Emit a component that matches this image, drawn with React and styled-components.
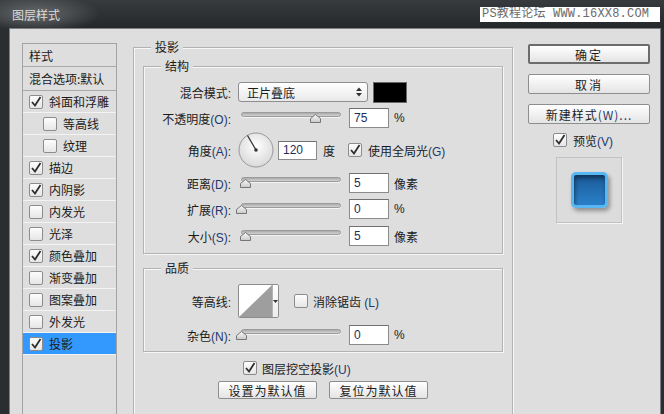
import React from "react";
import styled, { createGlobalStyle } from "styled-components";

const GlobalStyle = createGlobalStyle`
  html, body {
    margin: 0;
    padding: 0;
    background: #2b2e31;
  }
  body {
    font-family: "Liberation Sans", "Noto Sans CJK SC", sans-serif;
    font-size: 12px;
    color: #1b1b1b;
  }
  * {
    box-sizing: border-box;
  }
`;

const Window = styled.div`
  width: 664px;
  height: 414px;
  overflow: hidden;
  display: flex;
  flex-direction: column;
  background: #2b2e31;
`;

const TitleBar = styled.div`
  height: 28px;
  flex-shrink: 0;
  display: flex;
  align-items: center;
  justify-content: space-between;
  padding: 0 4px 0 12px;
  background: radial-gradient(ellipse 80px 24px at 36px 14px, rgba(125, 128, 131, 0.75), rgba(125, 128, 131, 0) 80%),
    linear-gradient(#383b3e, #25282b);
`;

const Title = styled.span`
  color: #dcdcdc;
  font-family: "Noto Sans CJK SC", sans-serif;
  font-size: 12px;
`;

const Watermark = styled.span`
  height: 15px;
  line-height: 15px;
  padding: 0 4px 0 2px;
  width: 180px;
  background: #fff;
  color: #6b6b6b;
  font-family: "Liberation Mono", "Noto Sans CJK SC", monospace;
  font-size: 12px;
  letter-spacing: 0.2px;
  white-space: nowrap;
  overflow: hidden;
`;

const Body = styled.div`
  flex: 1;
  margin: 0 3px 0 9px;
  background: #dedede;
  border: 1px solid #7d8083;
  border-bottom: none;
  display: flex;
  align-items: flex-start;
  padding: 14px 0 0 12px;
`;

/* ---------- left style list ---------- */

const LayerList = styled.div`
  width: 95px;
  height: 400px;
  flex-shrink: 0;
  border: 1px solid #a3a3a3;
  background: #dedede;
`;

const ListHead = styled.div`
  height: ${(p) => p.$h}px;
  display: flex;
  align-items: center;
  padding-left: 6px;
  border-bottom: 1px solid #a9a9a9;
  white-space: nowrap;
  font-family: "Noto Sans CJK SC", sans-serif;
`;

const ListItem = styled.div`
  height: 22px;
  display: flex;
  align-items: center;
  gap: 6px;
  padding-left: ${(p) => (p.$indent ? 20 : 6)}px;
  border-bottom: 1px solid #f3f3f3;
  background: ${(p) => (p.$active ? "#3399ff" : "transparent")};
  white-space: nowrap;
  font-family: "Noto Sans CJK SC", sans-serif;
`;

/* ---------- check box ---------- */

const Box = styled.span`
  width: 14px;
  height: 14px;
  flex-shrink: 0;
  display: inline-flex;
  border: 1px solid #8c8c8c;
  border-radius: 2px;
  background: linear-gradient(#fdfdfd, #e6e6e6);
  margin-left: ${(p) => p.$ml || 0}px;
`;

const CheckBox = ({ checked, ml }) => (
  <Box $ml={ml}>
    {checked && (
      <svg width="12" height="12" viewBox="0 0 12 12">
        <polyline points="2,6 5,9.5 10.5,1" fill="none" stroke="#2e2e2e" strokeWidth="1.8" />
      </svg>
    )}
  </Box>
);

/* ---------- middle panel ---------- */

const Group = styled.div`
  position: relative;
  border: 1px solid #b2b2b2;
  box-shadow: inset 1px 1px 0 #f7f7f7, 1px 1px 0 #f7f7f7;
  padding: ${(p) => p.$pad};
  margin-top: ${(p) => p.$mt || 0}px;
  width: ${(p) => (p.$w ? `${p.$w}px` : "auto")};
  flex-shrink: 0;
`;

const Caption = styled.span`
  position: absolute;
  top: -9px;
  left: 17px;
  padding: 0 4px;
  line-height: 16px;
  background: #dedede;
  font-family: "Noto Sans CJK SC", sans-serif;
`;

const FormRow = styled.div`
  display: flex;
  align-items: center;
  height: ${(p) => p.$h || 20}px;
  margin-top: ${(p) => p.$mt || 0}px;
  margin-left: ${(p) => p.$ml || 0}px;
  white-space: nowrap;
`;

const Label = styled.span`
  width: 87px;
  flex-shrink: 0;
  text-align: right;
  white-space: nowrap;
`;

const Key = styled.span`
  color: #24386b;
`;

const Text = styled.span`
  margin-left: ${(p) => p.$ml || 0}px;
`;

const Select = styled.div`
  margin-left: 7px;
  width: 130px;
  height: 20px;
  border: 1px solid #8e8e8e;
  border-radius: 3px;
  background: linear-gradient(#ffffff, #e9e9e9);
  display: flex;
  align-items: center;
  justify-content: space-between;
  padding: 0 5px 0 8px;
`;

const Swatch = styled.div`
  margin-left: 5px;
  width: 34px;
  height: 21px;
  background: #000;
  border: 1px solid #6a6a6a;
`;

const SliderWrap = styled.div`
  position: relative;
  width: 113px;
  height: 20px;
  margin-left: 5px;
  flex-shrink: 0;
`;

const Track = styled.div`
  position: absolute;
  left: 5px;
  top: 4px;
  width: 100px;
  height: 5px;
  border: 1px solid #9b9b9b;
  border-radius: 3px;
  background: linear-gradient(#a9a9a9, #d3d3d3);
  box-shadow: 0 1px 0 #f4f4f4;
`;

const Thumb = styled.svg`
  position: absolute;
  top: 6px;
`;

const Slider = ({ value }) => (
  <SliderWrap>
    <Track />
    <Thumb width="11" height="9" viewBox="0 0 11 9" style={{ left: 5 + value * 99 - 5.5 }}>
      <defs>
        <linearGradient id="tg" x1="0" y1="0" x2="0" y2="1">
          <stop offset="0" stopColor="#fafafa" />
          <stop offset="1" stopColor="#c9c9c9" />
        </linearGradient>
      </defs>
      <polygon points="0.5,8.5 0.5,4.5 5.5,0.5 10.5,4.5 10.5,8.5" fill="url(#tg)" stroke="#767676" />
    </Thumb>
  </SliderWrap>
);

const Field = styled.input`
  width: ${(p) => p.$w || 40}px;
  height: ${(p) => p.$h || 20}px;
  margin: 0 0 0 ${(p) => p.$ml || 0}px;
  padding: 0 0 0 4px;
  border: 1px solid #8b8b8b;
  border-top-color: #707070;
  background: #fff;
  font-family: "Liberation Sans", sans-serif;
  font-size: 12px;
  color: #1d2f5c;
  outline: none;
  flex-shrink: 0;
`;

const Dial = styled.svg`
  margin-left: 7px;
  flex-shrink: 0;
`;

const Contour = styled.div`
  margin-left: 7px;
  width: 41px;
  height: 34px;
  display: flex;
  border: 1px solid #8c8c8c;
  border-radius: 2px;
  background: #fff;
  overflow: hidden;
  flex-shrink: 0;
`;

const DropStrip = styled.div`
  flex: 1;
  border-left: 1px solid #b4b4b4;
  display: flex;
  align-items: center;
  justify-content: center;
  background: linear-gradient(#fff, #ececec);
`;

const ButtonRow = styled.div`
  display: flex;
  justify-content: center;
  gap: 12px;
  margin-top: 3px;
`;

const Button = styled.div`
  width: ${(p) => p.$w || 99}px;
  height: ${(p) => p.$h || 18}px;
  display: flex;
  align-items: center;
  justify-content: center;
  border: ${(p) => (p.$primary ? "2px solid #6c6c6c" : "1px solid #8e8e8e")};
  border-radius: 2px;
  background: linear-gradient(#ffffff, #e4e4e4);
  font-family: "Noto Sans CJK SC", sans-serif;
  letter-spacing: ${(p) => p.$ls || 0}px;
  white-space: nowrap;
`;

/* ---------- right column ---------- */

const Side = styled.div`
  width: 122px;
  margin: 1px 0 0 15px;
  display: flex;
  flex-direction: column;
  gap: 10px;
  flex-shrink: 0;
`;

const PreviewToggle = styled.div`
  display: flex;
  align-items: center;
  gap: 6px;
  height: 16px;
  margin-top: -2px;
  padding-left: 25px;
`;

const PreviewBox = styled.div`
  width: 66px;
  height: 66px;
  margin: -1px auto 0;
  border: 1px solid #c2c2c2;
  box-shadow: 1px 1px 0 #f6f6f6;
  background: #dcdcdc;
  display: flex;
  align-items: center;
  justify-content: center;
`;

const BlueSquare = styled.div`
  width: 37px;
  height: 36px;
  border-radius: 5px;
  border: 3px solid #58b6f2;
  background: linear-gradient(#1b5a98, #2a80c9);
  box-shadow: inset 1px 3px 4px rgba(0, 0, 0, 0.45), 2px 3px 4px rgba(0, 0, 0, 0.35);
`;

const effects = [
  { name: "斜面和浮雕", checked: true },
  { name: "等高线", indent: true },
  { name: "纹理", indent: true },
  { name: "描边", checked: true },
  { name: "内阴影", checked: true },
  { name: "内发光" },
  { name: "光泽" },
  { name: "颜色叠加", checked: true },
  { name: "渐变叠加" },
  { name: "图案叠加" },
  { name: "外发光" },
  { name: "投影", checked: true, active: true },
];

export default function App() {
  return (
    <Window>
      <GlobalStyle />
      <TitleBar>
        <Title>图层样式</Title>
        <Watermark>PS教程论坛 WWW.16XX8.COM</Watermark>
      </TitleBar>
      <Body>
        <LayerList>
          <ListHead $h={23}>样式</ListHead>
          <ListHead $h={24}>混合选项:默认</ListHead>
          {effects.map((e) => (
            <ListItem key={e.name} $indent={e.indent} $active={e.active}>
              <CheckBox checked={e.checked} />
              {e.name}
            </ListItem>
          ))}
        </LayerList>

        <div style={{ marginLeft: 16, marginTop: 4 }}>
          <Group $w={380} $pad="18px 9px 40px 9px">
            <Caption>投影</Caption>
            <Group $pad="15px 0 7px 0">
              <Caption>结构</Caption>
              <FormRow>
                <Label>混合模式:</Label>
                <Select>
                  <span style={{ fontFamily: "Noto Sans CJK SC" }}>正片叠底</span>
                  <svg width="6" height="10" viewBox="0 0 6 10">
                    <polygon points="0,4 3,0.5 6,4" fill="#333" />
                    <polygon points="0,6 3,9.5 6,6" fill="#333" />
                  </svg>
                </Select>
                <Swatch />
              </FormRow>
              <FormRow $mt={6}>
                <Label>
                  不透明度<Key>(O)</Key>:
                </Label>
                <Slider value={0.75} />
                <Field readOnly value="75" />
                <Text $ml={5}>%</Text>
              </FormRow>
              <FormRow $mt={4} $h={36}>
                <Label>
                  角度<Key>(A)</Key>:
                </Label>
                <Dial width="36" height="36" viewBox="0 0 36 36">
                  <defs>
                    <radialGradient id="dg" cx="0.5" cy="0.4" r="0.6">
                      <stop offset="0" stopColor="#ffffff" />
                      <stop offset="1" stopColor="#d9d9d9" />
                    </radialGradient>
                  </defs>
                  <circle cx="18" cy="18" r="17" fill="url(#dg)" stroke="#989898" />
                  <line x1="18" y1="18" x2="9.5" y2="3.5" stroke="#333" strokeWidth="1.3" />
                  <circle cx="18" cy="18" r="1.8" fill="#333" />
                </Dial>
                <Field readOnly value="120" $w={39} $h={19} $ml={4} />
                <Text $ml={6}>度</Text>
                <CheckBox checked ml={13} />
                <Text $ml={6}>
                  使用全局光<Key>(G)</Key>
                </Text>
              </FormRow>
              <FormRow $mt={5}>
                <Label>
                  距离<Key>(D)</Key>:
                </Label>
                <Slider value={0.05} />
                <Field readOnly value="5" />
                <Text $ml={5}>像素</Text>
              </FormRow>
              <FormRow $mt={6}>
                <Label>
                  扩展<Key>(R)</Key>:
                </Label>
                <Slider value={0} />
                <Field readOnly value="0" />
                <Text $ml={5}>%</Text>
              </FormRow>
              <FormRow $mt={7}>
                <Label>
                  大小<Key>(S)</Key>:
                </Label>
                <Slider value={0.05} />
                <Field readOnly value="5" />
                <Text $ml={5}>像素</Text>
              </FormRow>
            </Group>

            <Group $mt={14} $pad="15px 0 6px 0">
              <Caption>品质</Caption>
              <FormRow $h={34}>
                <Label>等高线:</Label>
                <Contour>
                  <svg width="33" height="32" viewBox="0 0 33 32">
                    <polygon points="0,32 33,0 33,32" fill="#9e9e9e" />
                  </svg>
                  <DropStrip>
                    <svg width="5" height="3" viewBox="0 0 5 3">
                      <polygon points="0,0 5,0 2.5,3" fill="#333" />
                    </svg>
                  </DropStrip>
                </Contour>
                <CheckBox ml={15} />
                <Text $ml={5}>
                  消除锯齿 <Key>(L)</Key>
                </Text>
              </FormRow>
              <FormRow $mt={7}>
                <Label>
                  杂色<Key>(N)</Key>:
                </Label>
                <Slider value={0} />
                <Field readOnly value="0" />
                <Text $ml={5}>%</Text>
              </FormRow>
            </Group>

            <FormRow $mt={6} $ml={100}>
              <CheckBox checked />
              <Text $ml={5}>
                图层挖空投影<Key>(U)</Key>
              </Text>
            </FormRow>
            <ButtonRow>
              <Button $ls={1}>设置为默认值</Button>
              <Button $ls={1}>复位为默认值</Button>
            </ButtonRow>
          </Group>
        </div>

        <Side>
          <Button $primary $w={122} $h={20} $ls={2}>
            确定
          </Button>
          <Button $w={122} $h={20} $ls={2}>
            取消
          </Button>
          <Button $w={122} $h={20} $ls={1}>
            新建样式<Key>(W)...</Key>
          </Button>
          <PreviewToggle>
            <CheckBox checked />
            <span>
              预览<Key>(V)</Key>
            </span>
          </PreviewToggle>
          <PreviewBox>
            <BlueSquare />
          </PreviewBox>
        </Side>
      </Body>
    </Window>
  );
}
